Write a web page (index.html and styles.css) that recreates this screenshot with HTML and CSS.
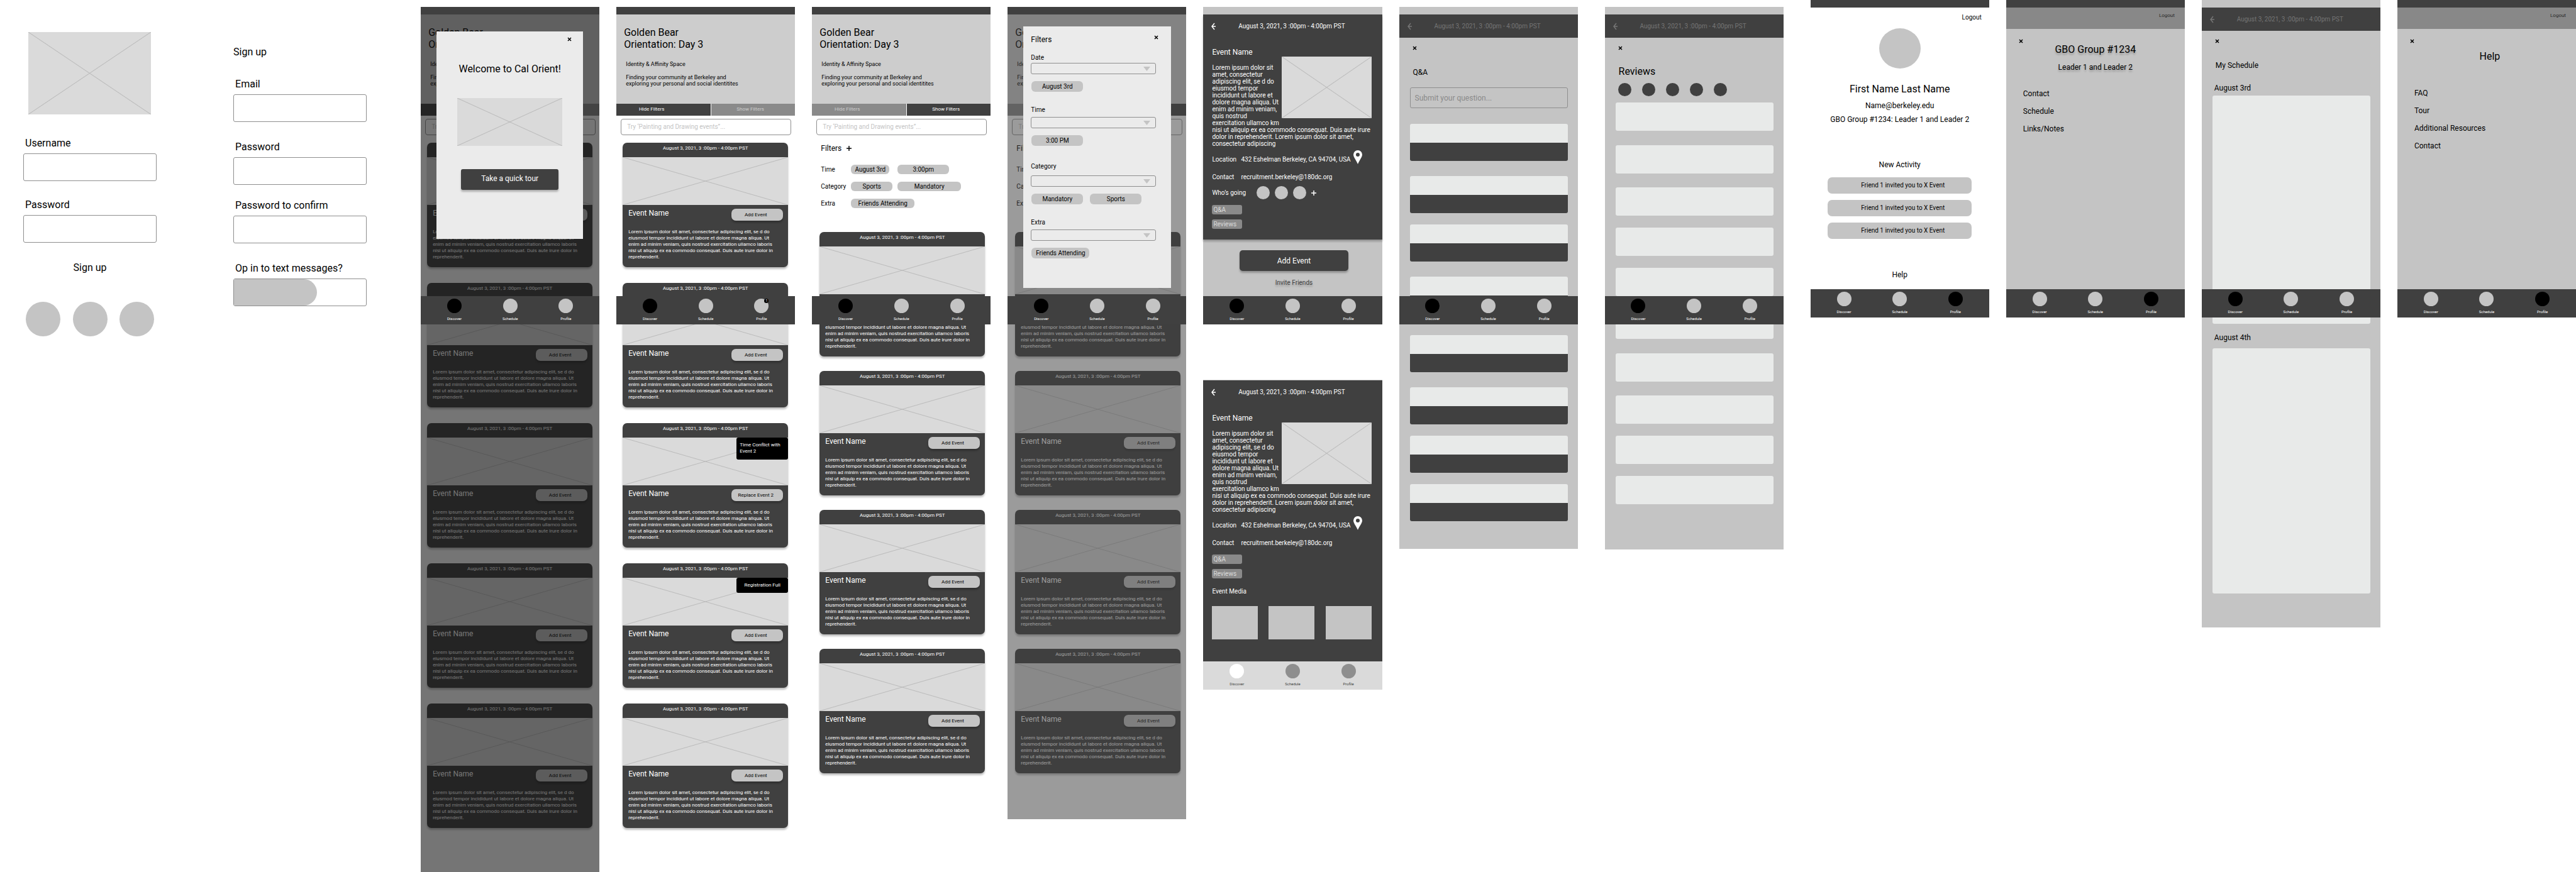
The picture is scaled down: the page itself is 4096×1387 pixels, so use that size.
FILE: index.html
```html
<!DOCTYPE html>
<html lang="en">
<head>
<meta charset="utf-8">
<title>Cal Orient wireframes</title>
<link rel="stylesheet" href="styles.css">
</head>
<body>
<main class="board">

<!-- Log in -->
<section class="auth auth-login">
  <div class="placeholder auth-logo"></div>
  <div class="field"><label for="login-user">Username</label><input id="login-user" type="text"></div>
  <div class="field"><label for="login-pass">Password</label><input id="login-pass" type="password"></div>
  <a class="auth-link" href="#">Sign up</a>
  <div class="auth-dots"><span></span><span></span><span></span></div>
</section>

<!-- Sign up -->
<section class="auth auth-signup">
  <h1 class="auth-title">Sign up</h1>
  <div class="field"><label for="su-email">Email</label><input id="su-email" type="email"></div>
  <div class="field"><label for="su-pass">Password</label><input id="su-pass" type="password"></div>
  <div class="field"><label for="su-confirm">Password to confirm</label><input id="su-confirm" type="password"></div>
  <div class="field"><label for="su-text">Op in to text messages?</label><input id="su-text" class="switch" type="checkbox" checked></div>
</section>

<!-- Discover with welcome message -->
<section class="screen screen-full">
  <div class="status"></div>
  <header class="hero"><h1>Golden Bear<br>Orientation: Day 3</h1><p>Identity &amp; Affinity Space</p><p>Finding your community at Berkeley and<br>exploring your personal and social identitites</p></header>
  <div class="tabs"><button class="tab tab-hide is-active">Hide Filters</button><button class="tab">Show Filters</button></div>
  <input class="search" type="search" aria-label="Search events" placeholder="Try ‘Painting and Drawing events”...">
  <div class="cards">
    <article class="card"><p class="card-date">August 3, 2021, 3 :00pm - 4:00pm PST</p><div class="placeholder card-image"></div><div class="card-row"><h2>Event Name</h2><button class="card-button">Add Event</button></div><p class="card-text">Lorem ipsum dolor sit amet, consectetur adipiscing elit, se d do<br>eiusmod tempor incididunt ut labore et dolore magna aliqua. Ut<br>enim ad minim veniam, quis nostrud exercitation ullamco laboris<br>nisi ut aliquip ex ea commodo consequat. Duis aute irure dolor in<br>reprehenderit.</p></article>
    <article class="card"><p class="card-date">August 3, 2021, 3 :00pm - 4:00pm PST</p><div class="placeholder card-image"></div><div class="card-row"><h2>Event Name</h2><button class="card-button">Add Event</button></div><p class="card-text">Lorem ipsum dolor sit amet, consectetur adipiscing elit, se d do<br>eiusmod tempor incididunt ut labore et dolore magna aliqua. Ut<br>enim ad minim veniam, quis nostrud exercitation ullamco laboris<br>nisi ut aliquip ex ea commodo consequat. Duis aute irure dolor in<br>reprehenderit.</p></article>
    <article class="card"><p class="card-date">August 3, 2021, 3 :00pm - 4:00pm PST</p><div class="placeholder card-image"></div><div class="card-row"><h2>Event Name</h2><button class="card-button">Add Event</button></div><p class="card-text">Lorem ipsum dolor sit amet, consectetur adipiscing elit, se d do<br>eiusmod tempor incididunt ut labore et dolore magna aliqua. Ut<br>enim ad minim veniam, quis nostrud exercitation ullamco laboris<br>nisi ut aliquip ex ea commodo consequat. Duis aute irure dolor in<br>reprehenderit.</p></article>
    <article class="card"><p class="card-date">August 3, 2021, 3 :00pm - 4:00pm PST</p><div class="placeholder card-image"></div><div class="card-row"><h2>Event Name</h2><button class="card-button">Add Event</button></div><p class="card-text">Lorem ipsum dolor sit amet, consectetur adipiscing elit, se d do<br>eiusmod tempor incididunt ut labore et dolore magna aliqua. Ut<br>enim ad minim veniam, quis nostrud exercitation ullamco laboris<br>nisi ut aliquip ex ea commodo consequat. Duis aute irure dolor in<br>reprehenderit.</p></article>
    <article class="card"><p class="card-date">August 3, 2021, 3 :00pm - 4:00pm PST</p><div class="placeholder card-image"></div><div class="card-row"><h2>Event Name</h2><button class="card-button">Add Event</button></div><p class="card-text">Lorem ipsum dolor sit amet, consectetur adipiscing elit, se d do<br>eiusmod tempor incididunt ut labore et dolore magna aliqua. Ut<br>enim ad minim veniam, quis nostrud exercitation ullamco laboris<br>nisi ut aliquip ex ea commodo consequat. Duis aute irure dolor in<br>reprehenderit.</p></article>
  </div>
  <div class="scrim scrim-dark"></div>
  <div class="modal modal-welcome" role="dialog" aria-label="Welcome">
    <button class="close modal-close" aria-label="Close"><svg viewBox="0 0 7 7"><path d="M1 1l5 5M6 1L1 6"/></svg></button>
    <h2>Welcome to Cal Orient!</h2>
    <div class="placeholder welcome-image"></div>
    <button class="primary">Take a quick tour</button>
  </div>
  <nav class="nav nav-over"><a class="is-current" href="#"><i></i>Discover</a><a href="#"><i></i>Schedule</a><a href="#"><i></i>Profile</a></nav>
</section>

<!-- Discover, filters hidden -->
<section class="screen">
  <div class="status"></div>
  <header class="hero"><h1>Golden Bear<br>Orientation: Day 3</h1><p>Identity &amp; Affinity Space</p><p>Finding your community at Berkeley and<br>exploring your personal and social identitites</p></header>
  <div class="tabs"><button class="tab tab-hide is-active">Hide Filters</button><button class="tab">Show Filters</button></div>
  <input class="search" type="search" aria-label="Search events" placeholder="Try ‘Painting and Drawing events”...">
  <div class="cards">
    <article class="card"><p class="card-date">August 3, 2021, 3 :00pm - 4:00pm PST</p><div class="placeholder card-image"></div><div class="card-row"><h2>Event Name</h2><button class="card-button">Add Event</button></div><p class="card-text">Lorem ipsum dolor sit amet, consectetur adipiscing elit, se d do<br>eiusmod tempor incididunt ut labore et dolore magna aliqua. Ut<br>enim ad minim veniam, quis nostrud exercitation ullamco laboris<br>nisi ut aliquip ex ea commodo consequat. Duis aute irure dolor in<br>reprehenderit.</p></article>
    <article class="card"><p class="card-date">August 3, 2021, 3 :00pm - 4:00pm PST</p><div class="placeholder card-image"></div><div class="card-row"><h2>Event Name</h2><button class="card-button">Add Event</button></div><p class="card-text">Lorem ipsum dolor sit amet, consectetur adipiscing elit, se d do<br>eiusmod tempor incididunt ut labore et dolore magna aliqua. Ut<br>enim ad minim veniam, quis nostrud exercitation ullamco laboris<br>nisi ut aliquip ex ea commodo consequat. Duis aute irure dolor in<br>reprehenderit.</p></article>
    <article class="card"><p class="card-date">August 3, 2021, 3 :00pm - 4:00pm PST</p><div class="placeholder card-image"><p class="notice">Time Conflict with<br>Event 2</p></div><div class="card-row"><h2>Event Name</h2><button class="card-button">Replace Event 2</button></div><p class="card-text">Lorem ipsum dolor sit amet, consectetur adipiscing elit, se d do<br>eiusmod tempor incididunt ut labore et dolore magna aliqua. Ut<br>enim ad minim veniam, quis nostrud exercitation ullamco laboris<br>nisi ut aliquip ex ea commodo consequat. Duis aute irure dolor in<br>reprehenderit.</p></article>
    <article class="card"><p class="card-date">August 3, 2021, 3 :00pm - 4:00pm PST</p><div class="placeholder card-image"><p class="notice notice-center">Registration Full</p></div><div class="card-row"><h2>Event Name</h2><button class="card-button">Add Event</button></div><p class="card-text">Lorem ipsum dolor sit amet, consectetur adipiscing elit, se d do<br>eiusmod tempor incididunt ut labore et dolore magna aliqua. Ut<br>enim ad minim veniam, quis nostrud exercitation ullamco laboris<br>nisi ut aliquip ex ea commodo consequat. Duis aute irure dolor in<br>reprehenderit.</p></article>
    <article class="card"><p class="card-date">August 3, 2021, 3 :00pm - 4:00pm PST</p><div class="placeholder card-image"></div><div class="card-row"><h2>Event Name</h2><button class="card-button">Add Event</button></div><p class="card-text">Lorem ipsum dolor sit amet, consectetur adipiscing elit, se d do<br>eiusmod tempor incididunt ut labore et dolore magna aliqua. Ut<br>enim ad minim veniam, quis nostrud exercitation ullamco laboris<br>nisi ut aliquip ex ea commodo consequat. Duis aute irure dolor in<br>reprehenderit.</p></article>
  </div>
  <nav class="nav nav-over"><a class="is-current" href="#"><i></i>Discover</a><a href="#"><i></i>Schedule</a><a href="#"><i><b class="badge">1</b></i>Profile</a></nav>
</section>

<!-- Discover, filters shown -->
<section class="screen">
  <div class="status"></div>
  <header class="hero"><h1>Golden Bear<br>Orientation: Day 3</h1><p>Identity &amp; Affinity Space</p><p>Finding your community at Berkeley and<br>exploring your personal and social identitites</p></header>
  <div class="tabs"><button class="tab tab-hide">Hide Filters</button><button class="tab is-active">Show Filters</button></div>
  <input class="search" type="search" aria-label="Search events" placeholder="Try ‘Painting and Drawing events”...">
  <div class="applied">
    <h2>Filters <button class="plus" aria-label="Add filter"><svg viewBox="0 0 8 8"><path d="M4 0v8M0 4h8"/></svg></button></h2>
    <div class="applied-grid">
      <span>Time</span><span class="chip chip-small">August 3rd</span><span class="chip chip-mid">3:00pm</span>
      <span>Category</span><span class="chip">Sports</span><span class="chip chip-wide">Mandatory</span>
      <span>Extra</span><span class="chip chip-wide">Friends Attending</span>
    </div>
  </div>
  <div class="cards cards-filtered">
    <article class="card"><p class="card-date">August 3, 2021, 3 :00pm - 4:00pm PST</p><div class="placeholder card-image"></div><div class="card-row"><h2>Event Name</h2><button class="card-button">Add Event</button></div><p class="card-text">Lorem ipsum dolor sit amet, consectetur adipiscing elit, se d do<br>eiusmod tempor incididunt ut labore et dolore magna aliqua. Ut<br>enim ad minim veniam, quis nostrud exercitation ullamco laboris<br>nisi ut aliquip ex ea commodo consequat. Duis aute irure dolor in<br>reprehenderit.</p></article>
    <article class="card"><p class="card-date">August 3, 2021, 3 :00pm - 4:00pm PST</p><div class="placeholder card-image"></div><div class="card-row"><h2>Event Name</h2><button class="card-button">Add Event</button></div><p class="card-text">Lorem ipsum dolor sit amet, consectetur adipiscing elit, se d do<br>eiusmod tempor incididunt ut labore et dolore magna aliqua. Ut<br>enim ad minim veniam, quis nostrud exercitation ullamco laboris<br>nisi ut aliquip ex ea commodo consequat. Duis aute irure dolor in<br>reprehenderit.</p></article>
    <article class="card"><p class="card-date">August 3, 2021, 3 :00pm - 4:00pm PST</p><div class="placeholder card-image"></div><div class="card-row"><h2>Event Name</h2><button class="card-button">Add Event</button></div><p class="card-text">Lorem ipsum dolor sit amet, consectetur adipiscing elit, se d do<br>eiusmod tempor incididunt ut labore et dolore magna aliqua. Ut<br>enim ad minim veniam, quis nostrud exercitation ullamco laboris<br>nisi ut aliquip ex ea commodo consequat. Duis aute irure dolor in<br>reprehenderit.</p></article>
    <article class="card"><p class="card-date">August 3, 2021, 3 :00pm - 4:00pm PST</p><div class="placeholder card-image"></div><div class="card-row"><h2>Event Name</h2><button class="card-button">Add Event</button></div><p class="card-text">Lorem ipsum dolor sit amet, consectetur adipiscing elit, se d do<br>eiusmod tempor incididunt ut labore et dolore magna aliqua. Ut<br>enim ad minim veniam, quis nostrud exercitation ullamco laboris<br>nisi ut aliquip ex ea commodo consequat. Duis aute irure dolor in<br>reprehenderit.</p></article>
  </div>
  <nav class="nav nav-over"><a class="is-current" href="#"><i></i>Discover</a><a href="#"><i></i>Schedule</a><a href="#"><i></i>Profile</a></nav>
</section>

<!-- Discover, filter dialog open -->
<section class="screen">
  <div class="status"></div>
  <header class="hero"><h1>Golden Bear<br>Orientation: Day 3</h1><p>Identity &amp; Affinity Space</p><p>Finding your community at Berkeley and<br>exploring your personal and social identitites</p></header>
  <div class="tabs"><button class="tab tab-hide">Hide Filters</button><button class="tab is-active">Show Filters</button></div>
  <input class="search" type="search" aria-label="Search events" placeholder="Try ‘Painting and Drawing events”...">
  <div class="applied">
    <h2>Filters</h2>
    <div class="applied-grid">
      <span>Time</span><span></span><span></span>
      <span>Category</span><span></span><span></span>
      <span>Extra</span><span></span><span></span>
    </div>
  </div>
  <div class="cards cards-filtered cards-end">
    <article class="card"><p class="card-date">August 3, 2021, 3 :00pm - 4:00pm PST</p><div class="placeholder card-image"></div><div class="card-row"><h2>Event Name</h2><button class="card-button">Add Event</button></div><p class="card-text">Lorem ipsum dolor sit amet, consectetur adipiscing elit, se d do<br>eiusmod tempor incididunt ut labore et dolore magna aliqua. Ut<br>enim ad minim veniam, quis nostrud exercitation ullamco laboris<br>nisi ut aliquip ex ea commodo consequat. Duis aute irure dolor in<br>reprehenderit.</p></article>
    <article class="card"><p class="card-date">August 3, 2021, 3 :00pm - 4:00pm PST</p><div class="placeholder card-image"></div><div class="card-row"><h2>Event Name</h2><button class="card-button">Add Event</button></div><p class="card-text">Lorem ipsum dolor sit amet, consectetur adipiscing elit, se d do<br>eiusmod tempor incididunt ut labore et dolore magna aliqua. Ut<br>enim ad minim veniam, quis nostrud exercitation ullamco laboris<br>nisi ut aliquip ex ea commodo consequat. Duis aute irure dolor in<br>reprehenderit.</p></article>
    <article class="card"><p class="card-date">August 3, 2021, 3 :00pm - 4:00pm PST</p><div class="placeholder card-image"></div><div class="card-row"><h2>Event Name</h2><button class="card-button">Add Event</button></div><p class="card-text">Lorem ipsum dolor sit amet, consectetur adipiscing elit, se d do<br>eiusmod tempor incididunt ut labore et dolore magna aliqua. Ut<br>enim ad minim veniam, quis nostrud exercitation ullamco laboris<br>nisi ut aliquip ex ea commodo consequat. Duis aute irure dolor in<br>reprehenderit.</p></article>
    <article class="card"><p class="card-date">August 3, 2021, 3 :00pm - 4:00pm PST</p><div class="placeholder card-image"></div><div class="card-row"><h2>Event Name</h2><button class="card-button">Add Event</button></div><p class="card-text">Lorem ipsum dolor sit amet, consectetur adipiscing elit, se d do<br>eiusmod tempor incididunt ut labore et dolore magna aliqua. Ut<br>enim ad minim veniam, quis nostrud exercitation ullamco laboris<br>nisi ut aliquip ex ea commodo consequat. Duis aute irure dolor in<br>reprehenderit.</p></article>
  </div>
  <div class="scrim scrim-grey"></div>
  <div class="modal modal-filters" role="dialog" aria-label="Filters">
    <div class="modal-head"><h2>Filters</h2><button class="close" aria-label="Close"><svg viewBox="0 0 7 7"><path d="M1 1l5 5M6 1L1 6"/></svg></button></div>
    <div class="filter filter-tight"><label for="f-date">Date</label><select id="f-date"><option value=""></option></select><div class="chips"><span class="chip chip-mid">August 3rd</span></div></div>
    <div class="filter"><label for="f-time">Time</label><select id="f-time"><option value=""></option></select><div class="chips"><span class="chip chip-mid">3:00 PM</span></div></div>
    <div class="filter filter-roomy"><label for="f-cat">Category</label><select id="f-cat"><option value=""></option></select><div class="chips"><span class="chip chip-mid">Mandatory</span><span class="chip chip-mid">Sports</span></div></div>
    <div class="filter"><label for="f-extra">Extra</label><select id="f-extra"><option value=""></option></select><div class="chips"><span class="chip chip-long">Friends Attending</span></div></div>
  </div>
  <nav class="nav nav-over"><a class="is-current" href="#"><i></i>Discover</a><a href="#"><i></i>Schedule</a><a href="#"><i></i>Profile</a></nav>
</section>

<!-- Event details, before and after adding -->
<div class="stack">
  <section class="screen screen-grey">
    <div class="status status-light"></div>
    <div class="detail">
      <div class="bar"><button class="back" aria-label="Back"><svg viewBox="0 0 8 12"><path d="M6 1L2 6l4 5M2 6h6"/></svg></button><span>August 3, 2021, 3 :00pm - 4:00pm PST</span></div>
      <h2>Event Name</h2>
      <div class="placeholder detail-image"></div>
      <p class="detail-text">Lorem ipsum dolor sit<br>amet, consectetur<br>adipiscing elit, se d do<br>eiusmod tempor<br>incididunt ut labore et<br>dolore magna aliqua. Ut<br>enim ad minim veniam,<br>quis nostrud<br>exercitation ullamco km<br>nisi ut aliquip ex ea commodo consequat. Duis aute irure<br>dolor in reprehenderit. Lorem ipsum dolor sit amet,<br>consectetur adipiscing</p>
      <div class="info info-place"><span class="info-name">Location</span><span>432 Eshelman Berkeley, CA 94704, USA</span><svg class="pin" viewBox="0 0 14 22"><path fill-rule="evenodd" d="M7 0a7 7 0 0 1 7 7c0 4-4 8-7 15C4 15 0 11 0 7a7 7 0 0 1 7-7zm0 4a3 3 0 1 0 0 6 3 3 0 0 0 0-6z"/></svg></div>
      <div class="info"><span class="info-name">Contact</span><span>recruitment.berkeley@180dc.org</span></div>
      <div class="going"><span class="going-name">Who’s going</span><i></i><i></i><i></i><button class="plus" aria-label="Invite"><svg viewBox="0 0 8 8"><path d="M4 0v8M0 4h8"/></svg></button></div>
      <div class="detail-links"><a href="#">Q&amp;A</a><a href="#">Reviews</a></div>
    </div>
    <div class="detail-foot"><button class="primary primary-wide">Add Event</button><a href="#">Invite Friends</a></div>
    <nav class="nav"><a class="is-current" href="#"><i></i>Discover</a><a href="#"><i></i>Schedule</a><a href="#"><i></i>Profile</a></nav>
  </section>
  <section class="screen screen-second">
    <div class="detail detail-added">
      <div class="bar"><button class="back" aria-label="Back"><svg viewBox="0 0 8 12"><path d="M6 1L2 6l4 5M2 6h6"/></svg></button><span>August 3, 2021, 3 :00pm - 4:00pm PST</span></div>
      <h2>Event Name</h2>
      <div class="placeholder detail-image"></div>
      <p class="detail-text">Lorem ipsum dolor sit<br>amet, consectetur<br>adipiscing elit, se d do<br>eiusmod tempor<br>incididunt ut labore et<br>dolore magna aliqua. Ut<br>enim ad minim veniam,<br>quis nostrud<br>exercitation ullamco km<br>nisi ut aliquip ex ea commodo consequat. Duis aute irure<br>dolor in reprehenderit. Lorem ipsum dolor sit amet,<br>consectetur adipiscing</p>
      <div class="info info-place"><span class="info-name">Location</span><span>432 Eshelman Berkeley, CA 94704, USA</span><svg class="pin" viewBox="0 0 14 22"><path fill-rule="evenodd" d="M7 0a7 7 0 0 1 7 7c0 4-4 8-7 15C4 15 0 11 0 7a7 7 0 0 1 7-7zm0 4a3 3 0 1 0 0 6 3 3 0 0 0 0-6z"/></svg></div>
      <div class="info"><span class="info-name">Contact</span><span>recruitment.berkeley@180dc.org</span></div>
      <div class="detail-links"><a href="#">Q&amp;A</a><a href="#">Reviews</a></div>
      <h3>Event Media</h3>
      <div class="media"><span></span><span></span><span></span></div>
    </div>
    <nav class="nav nav-light"><a class="is-current" href="#"><i></i>Discover</a><a href="#"><i></i>Schedule</a><a href="#"><i></i>Profile</a></nav>
  </section>
</div>

<!-- Q&A -->
<section class="screen screen-grey">
  <div class="status status-light"></div>
  <div class="bar bar-dim"><button class="back" aria-label="Back"><svg viewBox="0 0 8 12"><path d="M6 1L2 6l4 5M2 6h6"/></svg></button><span>August 3, 2021, 3 :00pm - 4:00pm PST</span></div>
  <div class="panel">
    <button class="close" aria-label="Close"><svg viewBox="0 0 7 7"><path d="M1 1l5 5M6 1L1 6"/></svg></button>
    <h2 class="panel-title">Q&amp;A</h2>
    <input class="ask" type="text" aria-label="Your question" placeholder="Submit your question...">
    <div class="threads">
      <div class="thread thread-mid"></div>
      <div class="thread"></div>
      <div class="thread thread-mid"></div>
      <div class="thread thread-far"></div>
      <div class="thread thread-mid"></div>
      <div class="thread"></div>
      <div class="thread"></div>
      <div class="thread"></div>
    </div>
  </div>
  <nav class="nav nav-over"><a class="is-current" href="#"><i></i>Discover</a><a href="#"><i></i>Schedule</a><a href="#"><i></i>Profile</a></nav>
</section>

<!-- Reviews -->
<section class="screen screen-grey screen-apart">
  <div class="status status-light"></div>
  <div class="bar bar-dim"><button class="back" aria-label="Back"><svg viewBox="0 0 8 12"><path d="M6 1L2 6l4 5M2 6h6"/></svg></button><span>August 3, 2021, 3 :00pm - 4:00pm PST</span></div>
  <div class="panel">
    <button class="close" aria-label="Close"><svg viewBox="0 0 7 7"><path d="M1 1l5 5M6 1L1 6"/></svg></button>
    <h2 class="panel-title panel-title-large">Reviews</h2>
    <div class="rating"><i></i><i></i><i></i><i></i><i></i></div>
    <div class="reviews">
      <div></div><div></div><div></div><div></div><div></div>
      <div></div><div></div><div></div><div></div><div></div>
    </div>
  </div>
  <nav class="nav nav-over"><a class="is-current" href="#"><i></i>Discover</a><a href="#"><i></i>Schedule</a><a href="#"><i></i>Profile</a></nav>
</section>

<!-- Profile -->
<section class="screen screen-top screen-apart">
  <div class="status"></div>
  <div class="profile">
    <a class="logout" href="#">Logout</a>
    <div class="avatar"></div>
    <h1>First Name Last Name</h1>
    <p class="profile-mail">Name@berkeley.edu</p>
    <p class="profile-group">GBO Group #1234: Leader 1 and Leader 2</p>
    <h2>New Activity</h2>
    <ul class="activity"><li>Friend 1 invited you to X Event</li><li>Friend 1 invited you to X Event</li><li>Friend 1 invited you to X Event</li></ul>
    <a class="profile-help" href="#">Help</a>
  </div>
  <nav class="nav"><a href="#"><i></i>Discover</a><a href="#"><i></i>Schedule</a><a class="is-current" href="#"><i></i>Profile</a></nav>
</section>

<!-- Group -->
<section class="screen screen-top screen-grey">
  <div class="status"></div>
  <div class="strip"><a href="#">Logout</a></div>
  <div class="sheet">
    <button class="close" aria-label="Close"><svg viewBox="0 0 7 7"><path d="M1 1l5 5M6 1L1 6"/></svg></button>
    <h1 class="group-name">GBO Group #1234</h1>
    <p class="group-leaders">Leader 1 and Leader 2</p>
    <ul class="menu"><li><a href="#">Contact</a></li><li><a href="#">Schedule</a></li><li><a href="#">Links/Notes</a></li></ul>
  </div>
  <nav class="nav"><a href="#"><i></i>Discover</a><a href="#"><i></i>Schedule</a><a class="is-current" href="#"><i></i>Profile</a></nav>
</section>

<!-- My schedule -->
<section class="screen screen-top screen-grey">
  <div class="status status-light"></div>
  <div class="bar bar-dim"><button class="back" aria-label="Back"><svg viewBox="0 0 8 12"><path d="M6 1L2 6l4 5M2 6h6"/></svg></button><span>August 3, 2021, 3 :00pm - 4:00pm PST</span></div>
  <div class="panel">
    <button class="close" aria-label="Close"><svg viewBox="0 0 7 7"><path d="M1 1l5 5M6 1L1 6"/></svg></button>
    <h2 class="panel-title">My Schedule</h2>
    <h3 class="day">August 3rd</h3>
    <div class="day-sheet"></div>
    <h3 class="day day-next">August 4th</h3>
    <div class="day-sheet day-sheet-tall"></div>
  </div>
  <nav class="nav nav-over"><a class="is-current" href="#"><i></i>Discover</a><a href="#"><i></i>Schedule</a><a href="#"><i></i>Profile</a></nav>
</section>

<!-- Help -->
<section class="screen screen-top screen-grey">
  <div class="status"></div>
  <div class="strip"><a href="#">Logout</a></div>
  <div class="sheet">
    <button class="close" aria-label="Close"><svg viewBox="0 0 7 7"><path d="M1 1l5 5M6 1L1 6"/></svg></button>
    <h1 class="help-title">Help</h1>
    <ul class="menu menu-help"><li><a href="#">FAQ</a></li><li><a href="#">Tour</a></li><li><a href="#">Additional Resources</a></li><li><a href="#">Contact</a></li></ul>
  </div>
  <nav class="nav"><a href="#"><i></i>Discover</a><a href="#"><i></i>Schedule</a><a class="is-current" href="#"><i></i>Profile</a></nav>
</section>

</main>
</body>
</html>
```
FILE: styles.css
```css
* { box-sizing: border-box; }

body, h1, h2, h3, p, ul { margin: 0; padding: 0; }

body {
  background: #fff;
  color: #000;
  font: 10px/12px Roboto, "Liberation Sans", sans-serif;
}

h1, h2, h3 { font-weight: 400; font-size: inherit; }
ul { list-style: none; }
a { color: inherit; text-decoration: none; }
button, input, select { font: inherit; color: inherit; border: 0; padding: 0; background: none; }
svg { display: block; }

.board {
  display: flex;
  align-items: flex-start;
  min-height: 100vh;
  padding-left: 37px;
}

.placeholder {
  background:
    linear-gradient(to top right, transparent calc(50% - 1px), #bbb 50%, transparent calc(50% + 1px)),
    linear-gradient(to bottom right, transparent calc(50% - 1px), #bbb 50%, transparent calc(50% + 1px)),
    #dadada;
}

/* Log in and sign up */
.auth { flex: 212 1 0; min-width: 0; font-size: 16px; line-height: 20px; }
.auth-login { padding-top: 51px; }
.auth-signup { margin-left: 122px; margin-right: 59px; padding-top: 73px; }
.auth-logo { height: 131px; margin: 0 9px 36px 8px; }
.field { display: flex; flex-direction: column; gap: 6px; margin-bottom: 28px; }
.field label { padding-left: 3px; }
.field input {
  width: 100%;
  height: 44px;
  margin: 0;
  border: 1px solid #8e8e8e;
  border-radius: 3px;
  background: #fff;
}
.auth-title { margin-bottom: 31px; }
.auth-signup .field { margin-bottom: 30px; }
.auth-signup .field:nth-of-type(2) { margin-bottom: 23px; }
.field .switch { appearance: none; overflow: hidden; }
.switch::before {
  content: "";
  display: block;
  width: 63%;
  height: 100%;
  background: #c4c4c4;
  border-radius: 0 21px 21px 0;
}
.auth-link { display: block; margin-top: 30px; text-align: center; }
.auth-dots { display: flex; justify-content: space-between; padding: 44px 4px 0; }
.auth-dots span { width: 55px; height: 55px; border-radius: 50%; background: #c4c4c4; }

/* Phone screens */
.screen, .stack { flex: 284 1 0; min-width: 0; margin-left: 27px; }
.screen { position: relative; margin-top: 11px; background: #fff; }
.stack { display: flex; flex-direction: column; }
.stack .screen { flex: none; margin-left: 0; }
.stack .screen-second { margin-top: 88px; }
.screen-full { align-self: stretch; padding-bottom: 68px; }
.screen-top { margin-top: 0; }
.screen-grey { background: #c4c4c4; }
.screen-apart { margin-left: 43px; }
.status { height: 12px; background: #404040; }
.status-light { background: #c4c4c4; }

/* Bottom navigation */
.nav {
  display: grid;
  grid-template-columns: repeat(3, 1fr);
  height: 45px;
  padding: 4px 9px 0;
  background: #404040;
  color: #fff;
  font-size: 6px;
  line-height: 8px;
  text-align: center;
}
.nav-over { position: absolute; top: 460px; left: 0; right: 0; }
.nav a { display: flex; flex-direction: column; align-items: center; gap: 5px; }
.nav i { position: relative; width: 23px; height: 23px; border-radius: 50%; background: #c4c4c4; }
.nav .is-current i { background: #000; }
.nav-light { background: #dadada; color: #404040; }
.nav-light i { background: #8e8e8e; }
.nav-light .is-current i { background: #fff; }
.badge {
  position: absolute;
  top: 0;
  right: 0;
  width: 7px;
  height: 7px;
  border-radius: 50%;
  background: #000;
  color: #fff;
  font-size: 5px;
  font-style: normal;
  font-weight: 400;
  line-height: 7px;
}

/* Discover */
.hero { padding: 19px 12px 27px; background: #cdcdcd; }
.hero h1 { margin-bottom: 17px; font-size: 16px; line-height: 19px; }
.hero p { margin: 0 0 11px 3px; font-size: 9px; line-height: 10px; }
.hero p:last-child { margin-bottom: 0; }
.tabs { display: flex; gap: 1px; height: 19px; font-size: 8px; }
.tab { flex: 149 1 0; padding: 0 9px 1px 0; background: #8a8a8a; color: #cdcdcd; }
.tab-hide { flex: 134 1 0; padding: 0 38px 1px 0; }
.tab.is-active { background: #404040; color: #fff; }
.search {
  display: block;
  width: calc(100% - 13px);
  height: 26px;
  margin: 5px 6px 0 7px;
  padding: 0 9px 2px;
  border: 1px solid #8e8e8e;
  border-radius: 4px;
}
.search::placeholder { color: #c4c4c4; opacity: 1; }

.cards { display: flex; flex-direction: column; gap: 25px; padding: 12px 11px 0 10px; }
.cards-filtered { gap: 23px; padding: 38px 9px 0 12px; }
.cards-end { padding-bottom: 73px; }
.card {
  height: 198px;
  border-radius: 7px;
  background: #404040;
  color: #fff;
  box-shadow: 0 3px 3px rgba(0, 0, 0, .25);
  font-size: 8px;
  line-height: 10px;
}
.card-date { height: 23px; padding-top: 4px; text-align: center; }
.card-image { position: relative; height: 76px; }
.card-row { display: flex; justify-content: space-between; padding: 6px 8px 0 9px; }
.card-row h2 { font-size: 12px; line-height: 14px; }
.card-button {
  width: 82px;
  height: 19px;
  padding-right: 5px;
  border-radius: 7px;
  background: #c4c4c4;
  color: #000;
  box-shadow: 0 3px 3px rgba(0, 0, 0, .25);
}
.card-text { padding: 13px 0 0 9px; white-space: nowrap; }
.notice {
  position: absolute;
  top: 0;
  right: 0;
  width: 82px;
  padding: 7px 0 8px 5px;
  border-radius: 3px;
  background: #000;
}
.notice-center { padding: 7px 0; text-align: center; }

.applied { padding: 14px 14px 0; }
.applied h2 { display: flex; align-items: center; gap: 8px; margin-bottom: 19px; font-size: 12px; line-height: 14px; }
.plus { width: 8px; height: 8px; }
.plus path { fill: none; stroke: currentColor; stroke-width: 1.5; }
.applied-grid { display: grid; grid-template-columns: 48px 74px 1fr; gap: 12px 0; line-height: 15px; }
.applied-grid span { min-height: 15px; }
.chip { width: 66px; height: 15px; border-radius: 6px; background: #c4c4c4; line-height: 15px; text-align: center; white-space: nowrap; }
.chip-small { width: 61px; }
.chip-mid { width: 82px; }
.chip-long { width: 92px; }
.chip-wide { width: 101px; }

/* Dialogs */
.scrim { position: absolute; inset: 12px 0 0; }
.scrim-dark { background: rgba(16, 16, 16, .576); }
.scrim-grey { background: rgba(64, 64, 64, .52); }
.modal { position: absolute; background: #ebebeb; }
.close { display: block; width: 7px; height: 7px; }
.close path { fill: none; stroke: currentColor; stroke-width: 1.5; }
.modal-welcome {
  top: 39px;
  left: 25px;
  right: 26px;
  height: 330px;
  display: flex;
  flex-direction: column;
  align-items: center;
  padding-top: 9px;
}
.modal-close { align-self: flex-end; margin-right: 18px; }
.modal-welcome h2 { margin: 34px 0 36px; font-size: 16px; line-height: 20px; }
.welcome-image { width: 167px; height: 76px; margin-bottom: 37px; }
.primary {
  width: 155px;
  height: 33px;
  padding-bottom: 4px;
  border-radius: 3px;
  background: #404040;
  color: #fff;
  box-shadow: 0 3px 3px rgba(0, 0, 0, .25);
  font-size: 12px;
}
.modal-filters { top: 31px; left: 25px; right: 24px; height: 416px; padding: 14px 24px 0 12px; }
.modal-head { display: flex; justify-content: space-between; margin-bottom: 16px; font-size: 12px; line-height: 14px; }
.modal-head .close { margin-right: -4px; }
.filter { display: flex; flex-direction: column; margin-bottom: 23px; }
.filter label { margin-bottom: 5px; }
.filter-tight label { margin-bottom: 2px; }
.filter-roomy { padding-top: 4px; }
.filter-roomy label { margin-bottom: 8px; }
.filter select {
  height: 18px;
  appearance: none;
  border: 1px solid #8e8e8e;
  border-radius: 3px;
  background: url("data:image/svg+xml,%3Csvg xmlns='http://www.w3.org/2000/svg' width='11' height='7'%3E%3Cpath d='M0 0h11L5.5 7z' fill='%23c4c4c4'/%3E%3C/svg%3E") right 8px center no-repeat;
}
.chips { display: flex; gap: 11px; padding: 11px 0 0 1px; }
.filter .chip { height: 17px; line-height: 17px; }

/* Event details */
.bar {
  display: flex;
  align-items: center;
  height: 37px;
  padding: 0 23px 0 12px;
  background: #404040;
  color: #fff;
}
.bar span { flex: 1; text-align: center; }
.back { width: 8px; height: 12px; }
.back path { fill: none; stroke: currentColor; stroke-width: 1.5; }
.bar-dim { color: #757575; }
.detail { padding: 0 17px 17px 14px; background: #404040; color: #fff; box-shadow: 0 3px 3px rgba(0, 0, 0, .25); }
.detail .bar { margin: 0 -17px 0 -14px; }
.detail h2 { padding-top: 16px; font-size: 12px; line-height: 14px; }
.detail-image { float: right; width: 143px; height: 98px; }
.detail-text { padding-top: 12px; line-height: 11px; white-space: nowrap; }
.info { display: flex; align-items: flex-end; margin-top: 14px; line-height: 14px; white-space: nowrap; }
.info-place { margin-top: 5px; }
.info-name { width: 46px; }
.pin { width: 14px; height: 22px; margin-left: 4px; fill: #fff; }
.going { display: flex; align-items: center; gap: 8px; margin-top: 7px; }
.going-name { width: 63px; }
.going i { width: 21px; height: 21px; border-radius: 50%; background: #c4c4c4; }
.detail-links { display: flex; flex-direction: column; gap: 8px; margin-top: 9px; }
.detail-links a { width: 48px; height: 15px; padding-left: 2px; border-radius: 3px; background: #8a8a8a; color: #dadada; line-height: 15px; }
.detail-foot { display: flex; flex-direction: column; align-items: center; min-height: 90px; padding: 17px 0 0 4px; color: #404040; text-shadow: 0 3px 3px rgba(0, 0, 0, .25); }
.primary-wide { width: 173px; margin-bottom: 13px; padding-bottom: 0; border-radius: 5px; }
.detail-added { padding-bottom: 35px; border-top: 1px solid #c4c4c4; box-shadow: none; }
.detail-added .detail-links { margin-top: 11px; }
.detail-added h3 { margin: 15px 0 17px; }
.media { display: flex; justify-content: space-between; }
.media span { width: 73px; height: 53px; background: #c4c4c4; }

/* Q&A, reviews and schedule */
.panel { padding: 13px 16px 44px 17px; }
.panel .close { margin-left: 4px; }
.panel-title { padding: 28px 0 17px 5px; font-size: 12px; line-height: 14px; }
.panel-title-large { padding: 24px 0 9px 5px; font-size: 16px; line-height: 19px; }
.ask { display: block; width: 100%; height: 33px; padding: 0 7px; border: 1px solid #8e8e8e; border-radius: 3px; font-size: 12px; }
.ask::placeholder { color: #8a8a8a; opacity: 1; }
.threads { margin-top: 25px; }
.thread { height: 59px; margin-bottom: 18px; border-top: 30px solid #e8eae9; border-radius: 3px; background: #404040; }
.thread-mid { margin-bottom: 24px; }
.thread-far { margin-bottom: 34px; }
.thread:last-child { margin-bottom: 0; }
.rating { display: flex; gap: 17px; padding-left: 4px; }
.rating i { width: 21px; height: 21px; border-radius: 50%; background: #404040; }
.reviews { margin-top: 10px; padding-bottom: 28px; }
.reviews div { height: 45px; margin-bottom: 19px; border-radius: 3px; background: #e8eae9; }
.reviews div:nth-child(5n), .reviews div:nth-child(5n + 1) { margin-bottom: 23px; }
.reviews div:nth-child(5n + 2) { margin-bottom: 22px; }
.reviews div:last-child { margin-bottom: 0; }
.day { margin: 5px 0 5px 3px; font-size: 12px; line-height: 14px; }
.day-next { margin: 15px 0 10px 3px; }
.day-sheet { height: 363px; border-radius: 3px; background: #e8eae9; }
.day-sheet-tall { height: 390px; margin-bottom: 10px; }

/* Profile, group and help */
.profile { display: flex; flex-direction: column; align-items: center; min-height: 448px; padding-top: 9px; font-size: 12px; line-height: 14px; }
.logout { align-self: flex-end; margin-right: 12px; font-size: 10px; line-height: 13px; }
.avatar { width: 66px; height: 64px; margin: 11px 0 23px; border-radius: 50%; background: #c4c4c4; }
.profile h1 { margin-bottom: 10px; font-size: 16px; line-height: 19px; }
.profile-mail { margin-bottom: 8px; }
.profile h2 { margin: 58px 0 13px; }
.activity { display: flex; flex-direction: column; gap: 10px; width: 229px; font-size: 10px; text-align: center; }
.activity li { height: 26px; padding-left: 10px; border-radius: 7px; background: #c4c4c4; line-height: 26px; }
.profile-help { margin-top: 50px; }
.strip { display: flex; justify-content: flex-end; height: 34px; padding: 7px 16px 0 0; background: #888; color: #2a2a2a; font-size: 8px; }
.sheet { min-height: 414px; padding: 16px 20px 0; font-size: 12px; line-height: 14px; }
.group-name, .help-title { font-size: 16px; line-height: 20px; text-align: center; }
.group-name, .group-leaders { text-shadow: 0 3px 3px rgba(0, 0, 0, .25); text-align: center; }
.group-leaders { margin-top: 11px; }
.help-title { margin-top: 11px; padding-left: 10px; }
.menu { display: flex; flex-direction: column; gap: 14px; margin-top: 28px; padding-left: 7px; }
.menu-help { margin-top: 41px; }
```
